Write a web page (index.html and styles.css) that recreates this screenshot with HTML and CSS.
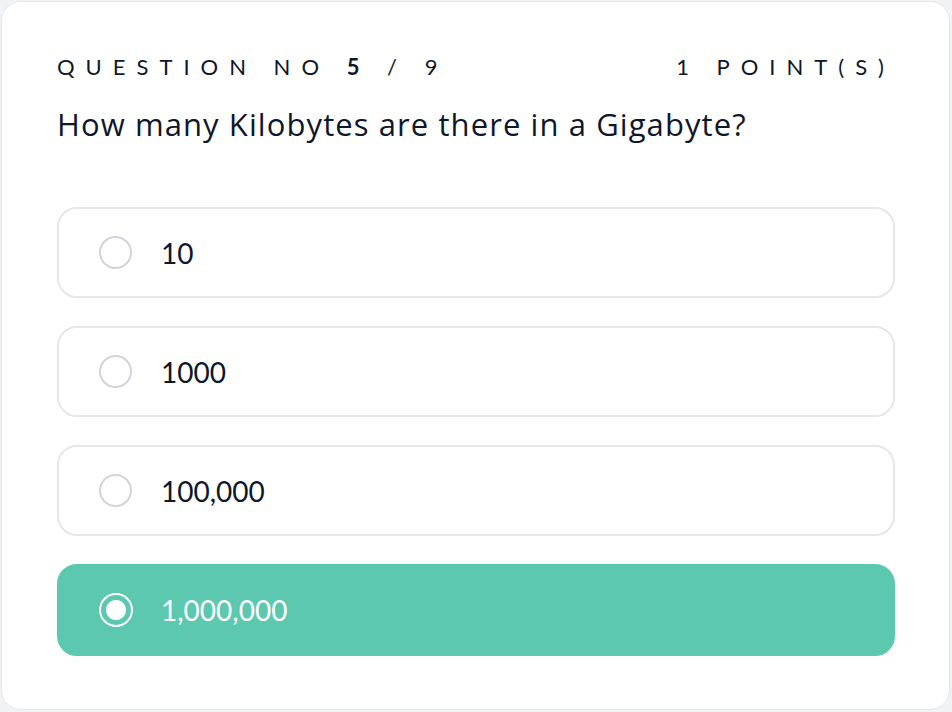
FILE: index.html
```html
<!DOCTYPE html>
<html>
<head>
  <title>Quiz</title>
  <meta name="viewport" content="width=device-width, initial-scale=1.0">
  <link rel="stylesheet" href="styles.css">
</head>
<body>
  <div class="card">
    <div class="quiz-header">
      <span class="question-no">Question no <b>5</b> / 9</span>
      <span class="points">1 point(s)</span>
    </div>
    <h1 class="question">How many Kilobytes are there in a Gigabyte?</h1>

    <div class="options">
      <label class="option">
        <span class="radio"></span>
        <span class="option-text">10</span>
      </label>
      <label class="option">
        <span class="radio"></span>
        <span class="option-text">1000</span>
      </label>
      <label class="option">
        <span class="radio"></span>
        <span class="option-text">100,000</span>
      </label>
      <label class="option selected">
        <span class="radio"></span>
        <span class="option-text">1,000,000</span>
      </label>
    </div>
  </div>
</body>
</html>
```

FILE: styles.css
```css
body {
  margin: 0;
  padding: 1px;
  font-family: Lato, "Noto Sans", sans-serif;
  background-color: #f1f2f4;
  color: #0f172a;
}

.card {
  box-sizing: border-box;
  width: 949px;
  height: 709px;
  background: white;
  border: 1px solid #e5e7eb;
  border-radius: 20px;
  padding: 50px 54px 0 55px;
}

.quiz-header {
  display: flex;
  justify-content: space-between;
  align-items: center;
  font-size: 22px;
  letter-spacing: 0.5em;
  text-transform: uppercase;
  line-height: 30px;
}

.question-no b {
  font-weight: 700;
}

.question {
  font-family: "Open Sans", Lato, sans-serif;
  font-size: 31px;
  letter-spacing: 0.035em;
  font-weight: 400;
  margin: 22px 0 63px 0;
  line-height: 40px;
}

.options {
  display: flex;
  flex-direction: column;
  gap: 28px;
}

.option {
  display: flex;
  align-items: center;
  height: 91px;
  box-sizing: border-box;
  border: 2px solid #e5e7eb;
  border-radius: 20px;
  padding-left: 40px;
  font-size: 28px;
  cursor: pointer;
}

.radio {
  width: 33px;
  height: 33px;
  border: 2px solid #d1d5db;
  border-radius: 50%;
  margin-right: 29px;
  box-sizing: border-box;
  flex-shrink: 0;
}

.option.selected {
  background: #5dc8b0;
  border-color: #5dc8b0;
  color: white;
  height: 92px;
}

.option.selected .radio {
  width: 34px;
  height: 34px;
  margin-right: 28px;
  border-color: white;
  background: radial-gradient(circle, white 0 9.5px, transparent 10.5px);
}
```
